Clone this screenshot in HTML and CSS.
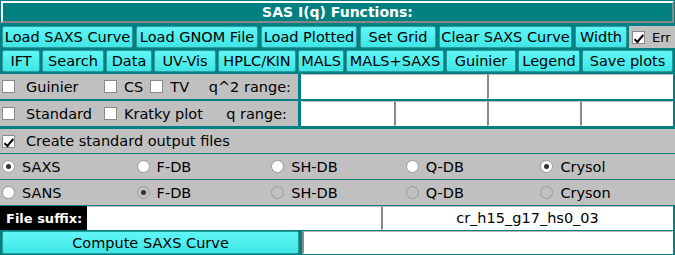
FILE: index.html
```html
<!DOCTYPE html>
<html lang="en">
<head>
    <meta charset="UTF-8">
    <title>SAS I(q) Functions</title>
    <link rel="stylesheet" href="styles.css">
</head>
<body>

    <div class="title">SAS I(q) Functions:</div>

    <!-- loading row -->
    <div class="btn-row load-row">
        <span class="btn">Load SAXS Curve</span>
        <span class="btn">Load GNOM File</span>
        <span class="btn">Load Plotted</span>
        <span class="btn">Set Grid</span>
        <span class="btn">Clear SAXS Curve</span>
        <span class="btn">Width</span>
        <span class="err"><span class="check on"></span>Err</span>
    </div>

    <!-- tools row -->
    <div class="btn-row tool-row">
        <span class="btn">IFT</span>
        <span class="btn">Search</span>
        <span class="btn">Data</span>
        <span class="btn">UV-Vis</span>
        <span class="btn">HPLC/KIN</span>
        <span class="btn">MALS</span>
        <span class="btn">MALS+SAXS</span>
        <span class="btn">Guinier</span>
        <span class="btn">Legend</span>
        <span class="btn">Save plots</span>
    </div>

    <div class="plot-opts">
        <div class="opts-panel">
            <div class="opts-line">
                <span class="opt"><span class="check"></span>Guinier</span>
                <span class="opt small"><span class="check"></span>CS<span class="check gap"></span>TV</span>
                <span class="range">q^2 range:</span>
            </div>
            <div class="opts-line">
                <span class="opt"><span class="check"></span>Standard</span>
                <span class="opt small"><span class="check"></span>Kratky plot</span>
                <span class="range short">q range:</span>
            </div>
        </div>
        <div class="range-entries">
            <div class="entry-line">
                <span class="entry"></span>
                <span class="entry"></span>
            </div>
            <div class="entry-line">
                <span class="entry"></span>
                <span class="entry"></span>
                <span class="entry"></span>
                <span class="entry"></span>
            </div>
        </div>
    </div>

    <div class="bar output-bar">
        <span class="opt"><span class="check on"></span>Create standard output files</span>
    </div>

    <div class="bar radios">
        <span class="radio-opt"><span class="radio on"></span>SAXS</span>
        <span class="radio-opt"><span class="radio"></span>F-DB</span>
        <span class="radio-opt"><span class="radio"></span>SH-DB</span>
        <span class="radio-opt"><span class="radio"></span>Q-DB</span>
        <span class="radio-opt"><span class="radio on"></span>Crysol</span>
    </div>

    <div class="bar radios">
        <span class="radio-opt"><span class="radio"></span>SANS</span>
        <span class="radio-opt"><span class="radio on off"></span>F-DB</span>
        <span class="radio-opt"><span class="radio off"></span>SH-DB</span>
        <span class="radio-opt"><span class="radio off"></span>Q-DB</span>
        <span class="radio-opt"><span class="radio off"></span>Cryson</span>
    </div>

    <div class="suffix-row">
        <span class="suffix-label">File suffix:</span>
        <span class="entry"></span>
        <span class="entry centered">cr_h15_g17_hs0_03</span>
    </div>

    <div class="compute-row">
        <span class="btn compute">Compute SAXS Curve</span>
        <span class="entry"></span>
    </div>

</body>
</html>
```

FILE: styles.css
```css
body {
    font-family: 'DejaVu Sans', sans-serif;
    font-size: 14.5px;
    background-color: #008080;
    color: #000;
    margin: 0;
    padding: 1px 0 0 0;
    width: 675px;
}

.title {
    margin: 0 1px;
    height: 18px;
    line-height: 18px;
    border: 2px solid #fff;
    border-right-color: #888;
    border-bottom-color: #888;
    color: #fff;
    font-weight: bold;
    font-size: 14px;
    text-align: center;
}

.btn-row {
    display: grid;
    height: 22px;
}

.load-row {
    margin: 3px 0 0 2px;
    column-gap: 3px;
    grid-template-columns: 131px 122px 96px 76px 133px 52px 1fr;
}

.tool-row {
    margin: 2px 2px 0 2px;
    column-gap: 2px;
    grid-template-columns: 38px 62px 46px 62px 78px 46px 98px 70px 62px 1fr;
}

.btn {
    display: flex;
    align-items: center;
    justify-content: center;
    white-space: nowrap;
    background: linear-gradient(#62f6f6, #3ee6e6);
    border: 1px solid #2c9a9a;
    border-radius: 2px;
    box-sizing: border-box;
}

.err {
    display: flex;
    align-items: center;
    gap: 7px;
    background-color: #c0c0c0;
    margin-left: -1px;
    padding-left: 3px;
    font-size: 13px;
}

.check {
    display: inline-block;
    width: 13px;
    height: 13px;
    box-sizing: border-box;
    background-color: #fff;
    border: 1px solid #8a8a8a;
    position: relative;
    vertical-align: middle;
    margin-right: 11px;
}

.err .check {
    margin-right: 0;
}

.check.on::after {
    content: "";
    position: absolute;
    left: 2px;
    top: 1px;
    width: 3px;
    height: 8px;
    border: solid #000;
    border-width: 0 2px 2px 0;
    transform: rotate(40deg) translate(1px, -1px);
}

.plot-opts {
    display: flex;
    gap: 3px;
    margin-top: 2px;
}

.opts-panel {
    width: 298px;
    display: flex;
    flex-direction: column;
    gap: 2px;
}

.opts-line {
    display: flex;
    align-items: center;
    height: 25px;
    background-color: #c0c0c0;
    padding-left: 2px;
}

.opt {
    display: flex;
    align-items: center;
    white-space: nowrap;
    width: 102px;
}

.opt.small {
    width: auto;
    flex: 1;
}

.opt.small .check {
    margin-right: 7px;
}

.opt.small .check.gap {
    margin-left: 7px;
}

.range {
    padding-right: 7px;
}

.range.short {
    padding-right: 11px;
}

.range-entries {
    flex: 1;
    display: flex;
    flex-direction: column;
    gap: 2px;
    margin-right: 2px;
}

.entry-line {
    display: flex;
    height: 25px;
}

.entry {
    flex: 1;
    background-color: #fff;
    border: 1px solid #fff;
    border-left: 2px solid #8a8a8a;
    border-top-color: #b8b8b8;
    box-sizing: border-box;
}

.entry-line .entry:first-child {
    border-left-color: #fff;
}

.bar {
    display: flex;
    align-items: center;
    height: 25px;
    background-color: #c0c0c0;
    margin-top: 1px;
    padding-left: 2px;
}

.output-bar {
    height: 24px;
    margin-top: 3px;
    margin-bottom: 1px;
}

.bar .opt {
    width: auto;
}

.radios {
    display: grid;
    grid-template-columns: repeat(5, 1fr);
}

.radio-opt {
    display: flex;
    align-items: center;
    gap: 7px;
}

.radio {
    width: 13px;
    height: 13px;
    box-sizing: border-box;
    border-radius: 50%;
    background-color: #fff;
    border: 1px solid #999;
    display: flex;
    align-items: center;
    justify-content: center;
}

.radio.on::after {
    content: "";
    width: 5px;
    height: 5px;
    border-radius: 50%;
    background-color: #333;
}

.radio.off {
    background-color: #c0c0c0;
    border-color: #9a9a9a;
}

.suffix-row {
    display: flex;
    height: 24px;
    margin-top: 1px;
    margin-right: 2px;
}

.suffix-label {
    background-color: #000;
    color: #fff;
    font-weight: bold;
    font-size: 13px;
    display: flex;
    align-items: center;
    width: 87px;
    box-sizing: border-box;
    padding-left: 6px;
}

.suffix-row .entry:nth-child(2) {
    flex: 0 0 294px;
    border-left-color: #fff;
}

.entry.centered {
    display: flex;
    align-items: center;
    justify-content: center;
}

.compute-row {
    display: flex;
    gap: 3px;
    height: 23px;
    margin: 1px 2px 0 2px;
}

.compute-row .compute {
    flex: 0 0 297px;
}
```
